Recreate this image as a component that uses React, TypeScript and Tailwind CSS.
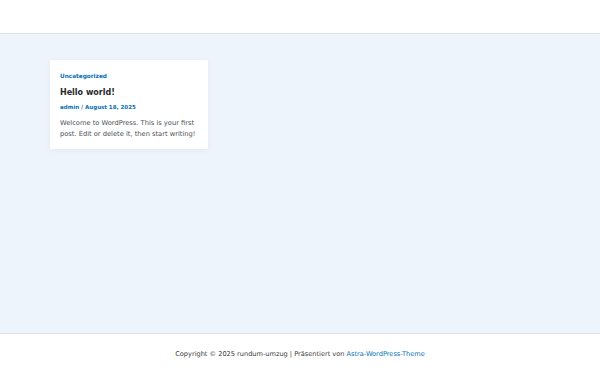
export default function App() {
  return (
    <div className="min-h-screen flex flex-col bg-[#eef4fc] text-[#3a3a3a]" style={{ fontFamily: '"DejaVu Sans", sans-serif' }}>
      {/* Header */}
      <header className="h-[34px] bg-white border-b border-[#dde3ea]" />

      {/* Content */}
      <main className="flex-1 h-[299px] px-[50px] pt-[26px]">
        <article className="w-[158px] bg-white shadow-[0_1px_6px_rgba(0,0,0,0.05)] px-[10px] pt-[12px] pb-[9px]">
          <div className="text-[5.75px] font-bold text-[#0170b9] leading-[8px]">Uncategorized</div>
          <h2 className="mt-[8px] text-[8px] font-bold text-[#2a2a2a] leading-[10px]">Hello world!</h2>
          <div className="mt-[5px] text-[5.5px] font-bold text-[#0170b9] leading-[8px]">admin / August 18, 2025</div>
          <p className="mt-[7px] text-[6.7px] leading-[11px] text-[#4b4f58]">
            Welcome to WordPress. This is your first post. Edit or delete it, then start writing!
          </p>
        </article>
      </main>

      {/* Footer */}
      <footer className="h-[42px] bg-white border-t border-[#dde3ea] flex items-center justify-center text-[6.6px] text-[#3a3a3a]">
        <span>
          Copyright © 2025 rundum-umzug | Präsentiert von{' '}
          <span className="text-[#0170b9]">Astra-WordPress-Theme</span>
        </span>
      </footer>
    </div>
  )
}
